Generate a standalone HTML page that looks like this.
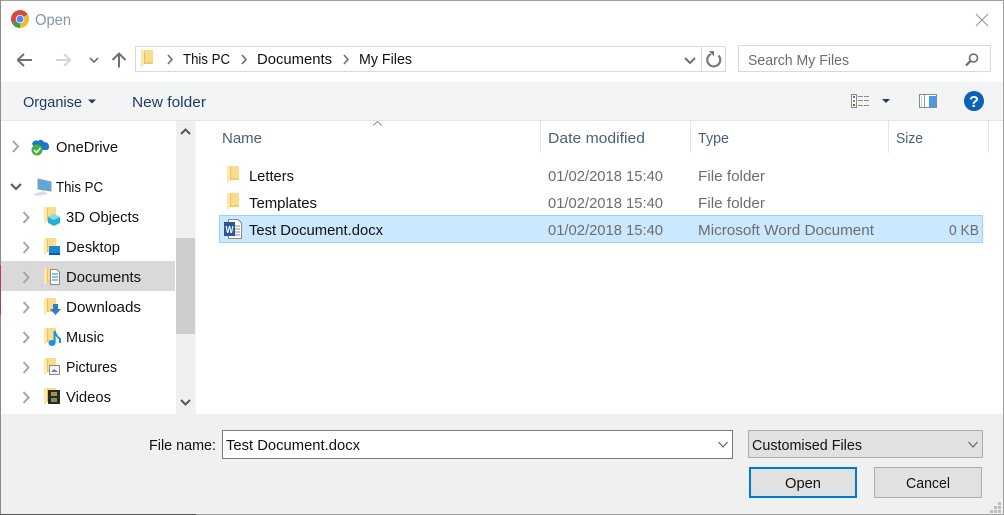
<!DOCTYPE html>
<html><head><meta charset="utf-8"><title>Open</title>
<style>
html,body{margin:0;padding:0;width:1004px;height:515px;overflow:hidden;background:#fff}
svg{display:block}
text{font-family:"Liberation Sans",sans-serif;font-size:15px;fill:#111;white-space:pre}
.h{fill:#4c607a}.g{fill:#6d6d6d}.t{fill:#1e3a5f}
</style></head><body>
<svg width="1004" height="515" viewBox="0 0 1004 515" xmlns="http://www.w3.org/2000/svg">
<defs>
<g id="f"><path d="M0 0 H12 V14 H3 L1 17 L0 16Z" fill="#f8dd8c"/><path d="M0 0 H3 V14 L1 17 L0 16Z" fill="#fbe9ac"/><rect x="3" y="1" width="1" height="13" fill="#e8c262"/><rect x="4" y="12" width="8" height="2" fill="#f0cc6c"/></g>
<path id="ch" d="M0 0 L5 5.500 L0 11" fill="none" stroke="#a6a6a6" stroke-width="2"/>
</defs>
<rect width="1004" height="515" fill="#fff"/>
<!-- window edges -->
<rect x="0" y="0" width="1004" height="1" fill="#a0a0a0"/>
<rect x="0" y="0" width="1" height="515" fill="#8c8c8c"/>
<rect x="0" y="265" width="1" height="50" fill="#b04050"/>
<rect x="1003" y="0" width="1" height="515" fill="#a0a0a0"/>
<!-- title -->
<path d="M20 19 L12.200 23.500 A9 9 0 0 1 27.800 14.500 Z" fill="#d9483b"/>
<path d="M20 19 L27.800 14.500 A9 9 0 0 1 20 28 Z" fill="#eebb33"/>
<path d="M20 19 L20 28 A9 9 0 0 1 12.200 23.500 Z" fill="#3c9c4c"/>
<circle cx="20" cy="19" r="4.300" fill="#f2f2f2"/><circle cx="20" cy="19" r="3.400" fill="#4a8af4"/>
<text x="35" y="25" textLength="36" lengthAdjust="spacingAndGlyphs" style="fill:#8a97a8;font-size:16px">Open</text>
<path d="M976 14 L988 26 M988 14 L976 26" stroke="#8f8f8f" stroke-width="1" fill="none"/>
<!-- nav arrows -->
<path d="M17.500 60 H32 M17.500 60 L24 54 M17.500 60 L24 66" stroke="#6f6f6f" stroke-width="2" fill="none"/>
<path d="M56 60 H70.500 M70.500 60 L64 54 M70.500 60 L64 66" stroke="#d6d6d6" stroke-width="2" fill="none"/>
<path d="M90 58 L94 62 L98 58" stroke="#6f6f6f" stroke-width="1.600" fill="none"/>
<path d="M119 67.500 V54 M112.500 60 L119 53.500 L125.500 60" stroke="#6f6f6f" stroke-width="2" fill="none"/>
<!-- address -->
<rect x="135.500" y="46.500" width="590" height="25" fill="#fff" stroke="#d9d9d9"/>
<rect x="701" y="47" width="1" height="24" fill="#d9d9d9"/>
<use href="#f" x="141" y="50"/>
<path d="M168 55 L172 59.500 L168 64" stroke="#6a6a6a" stroke-width="1.500" fill="none"/>
<path d="M242 55 L246 59.500 L242 64" stroke="#6a6a6a" stroke-width="1.500" fill="none"/>
<path d="M344 55 L348 59.500 L344 64" stroke="#6a6a6a" stroke-width="1.500" fill="none"/>
<text x="183" y="64" textLength="47" lengthAdjust="spacingAndGlyphs">This PC</text>
<text x="257" y="64" textLength="75" lengthAdjust="spacingAndGlyphs">Documents</text>
<text x="359" y="64" textLength="53" lengthAdjust="spacingAndGlyphs">My Files</text>
<path d="M685 58 L690 63 L695 58" stroke="#6f6f6f" stroke-width="2" fill="none"/>
<path d="M711 54 A6.500 6.500 0 1 0 718.500 55.500" stroke="#7a7a7a" stroke-width="2.200" fill="none"/>
<path d="M709 51 L714 51 L714 56.500Z" fill="#7a7a7a"/>
<!-- search -->
<rect x="738.500" y="45.500" width="252" height="26" fill="#fff" stroke="#d9d9d9"/>
<text x="748" y="65" textLength="101" lengthAdjust="spacingAndGlyphs" class="g">Search My Files</text>
<circle cx="973.500" cy="58" r="4" fill="none" stroke="#6a6a6a" stroke-width="1.600"/>
<path d="M970.500 61 L966 65.500" stroke="#6a6a6a" stroke-width="2.200"/>
<!-- toolbar -->
<rect x="1" y="82" width="1002" height="38" fill="#f3f4f6"/>
<rect x="1" y="120" width="1002" height="1" fill="#e4e5e7"/>
<text x="23" y="107" textLength="59" lengthAdjust="spacingAndGlyphs" class="t">Organise</text>
<path d="M88 99.500 H96 L92 103.500Z" fill="#1e3a5f"/>
<text x="132" y="107" textLength="74" lengthAdjust="spacingAndGlyphs" class="t">New folder</text>
<rect x="851.500" y="94.500" width="5" height="13" fill="#fff" stroke="#8a8a8a"/>
<rect x="853" y="96" width="2" height="2" fill="#4a7fc0"/><rect x="853" y="100" width="2" height="2" fill="#8a9a30"/><rect x="853" y="104" width="2" height="2" fill="#c04020"/>
<path d="M858 96.500 H869 M858 100.500 H869 M858 105.500 H869" stroke="#8a8a8a" stroke-width="1" stroke-dasharray="5 1"/>
<path d="M882 99 H890 L886 103Z" fill="#1e3a5f"/>
<rect x="919.500" y="94.500" width="17" height="13" fill="#fff" stroke="#8a8a8a"/>
<rect x="921" y="96" width="1" height="11" fill="#c8c8c8"/>
<rect x="929" y="96" width="7" height="11" fill="#4a9ae8"/>
<rect x="924" y="95" width="1" height="12" fill="#9a9a9a"/>
<circle cx="974" cy="101" r="10" fill="#0a62b8"/>
<text x="969" y="107" textLength="10" lengthAdjust="spacingAndGlyphs" style="fill:#fff;font-weight:bold;font-size:16px">?</text>
<!-- nav tree -->
<rect x="1" y="261" width="174" height="30" fill="#d9d9d9"/>
<use href="#ch" x="13" y="141"/>
<path d="M32 144 Q34 139 38 141 Q41 138 44 142 Q49 142 49 147 Q49 150 46 150 H36Z" fill="#1a7ac8"/>
<circle cx="37" cy="150" r="5.500" fill="#46b03c"/><path d="M34 150 L36.500 152.500 L40.500 148" stroke="#fff" stroke-width="1.500" fill="none"/>
<text x="56" y="152" textLength="62" lengthAdjust="spacingAndGlyphs">OneDrive</text>
<path d="M11 184 L16 189 L21 184" stroke="#555" stroke-width="2" fill="none"/>
<path d="M38 179 L51 182 V191 L38 189Z" fill="#5aa8dc" stroke="#8f9aa5"/>
<path d="M33 194 L44 191 L48 194 L37 196Z" fill="#d8dde2"/>
<text x="56" y="192" textLength="47" lengthAdjust="spacingAndGlyphs">This PC</text>
<use href="#ch" x="23.500" y="212"/><use href="#f" x="44" y="207"/>
<path d="M48 217 L54 214 L60 217 V223 L54 226 L48 223Z" fill="#29b0d0"/><path d="M48 217 L54 220 L60 217 L54 214Z" fill="#7fdcee"/>
<text x="66" y="222" textLength="73" lengthAdjust="spacingAndGlyphs">3D Objects</text>
<use href="#ch" x="23.500" y="242"/><use href="#f" x="44" y="238"/>
<rect x="49" y="246" width="11" height="8" fill="#1a86d8"/><rect x="49" y="253" width="11" height="2" fill="#0c5a9c"/>
<text x="66" y="252" textLength="54" lengthAdjust="spacingAndGlyphs">Desktop</text>
<use href="#ch" x="23.500" y="272"/><use href="#f" x="44" y="268"/>
<path d="M50.500 269.500 H57 L59.500 272 V284.500 H50.500Z" fill="#fff" stroke="#8a8a8a"/>
<path d="M52 274 H58 M52 277 H58 M52 280 H58" stroke="#2a7fc8"/>
<text x="66" y="282" textLength="75" lengthAdjust="spacingAndGlyphs">Documents</text>
<use href="#ch" x="23.500" y="302"/><use href="#f" x="44" y="298"/>
<path d="M53 304 H58 V309 H61 L55.500 315 L50 309 H53Z" fill="#2a7fc8"/>
<text x="66" y="312" textLength="75" lengthAdjust="spacingAndGlyphs">Downloads</text>
<use href="#ch" x="23.500" y="332"/><use href="#f" x="44" y="328"/>
<ellipse cx="52" cy="343" rx="3.500" ry="3" fill="#1a92e8"/><path d="M54.500 343 V331 Q56 336 60 339 V343" stroke="#1a92e8" stroke-width="2" fill="none"/>
<text x="66" y="342" textLength="38" lengthAdjust="spacingAndGlyphs">Music</text>
<use href="#ch" x="23.500" y="362"/><use href="#f" x="44" y="358"/>
<rect x="49.500" y="365.500" width="10" height="9" fill="#f4f4f4" stroke="#8a8a8a"/><path d="M51 372 L54 369 L58 372Z" fill="#6a8a9a"/>
<text x="66" y="372" textLength="51" lengthAdjust="spacingAndGlyphs">Pictures</text>
<use href="#ch" x="23.500" y="392"/><use href="#f" x="44" y="388"/>
<rect x="48" y="390" width="12" height="14" fill="#2a2a2a"/><rect x="51" y="392" width="6" height="4" fill="#b09050"/><rect x="51" y="398" width="6" height="4" fill="#709a50"/>
<text x="66" y="402" textLength="45" lengthAdjust="spacingAndGlyphs">Videos</text>
<!-- nav scrollbar -->
<rect x="176" y="121" width="19" height="293" fill="#f0f0f0"/>
<rect x="176" y="238" width="19" height="96" fill="#cdcdcd"/>
<rect x="195" y="121" width="1" height="293" fill="#f4f4f4"/>
<path d="M181 134 L185.500 129.500 L190 134" stroke="#555" stroke-width="2" fill="none"/>
<path d="M181 400 L185.500 404.500 L190 400" stroke="#555" stroke-width="2" fill="none"/>
<!-- headers -->
<path d="M373 125.500 L377.500 121.500 L382 125.500" stroke="#8a8a8a" fill="none"/>
<text x="222" y="143" textLength="40" lengthAdjust="spacingAndGlyphs" class="h">Name</text>
<text x="548" y="143" textLength="97" lengthAdjust="spacingAndGlyphs" class="h">Date modified</text>
<text x="698" y="143" textLength="31" lengthAdjust="spacingAndGlyphs" class="h">Type</text>
<text x="896" y="143" textLength="27" lengthAdjust="spacingAndGlyphs" class="h">Size</text>
<rect x="540" y="121" width="1" height="32" fill="#e5e5e5"/><rect x="690" y="121" width="1" height="32" fill="#e5e5e5"/>
<rect x="888" y="121" width="1" height="32" fill="#e5e5e5"/><rect x="988" y="121" width="1" height="32" fill="#e5e5e5"/>
<!-- rows -->
<rect x="219.500" y="215.500" width="763" height="27" fill="#cce8ff" stroke="#99d1ff"/>
<use href="#f" x="227" y="166"/><use href="#f" x="227" y="193"/>
<path d="M228.500 219.500 H238 L241.500 223 V238.500 H228.500Z" fill="#fff" stroke="#8a8a8a"/>
<path d="M235 226 H240 M235 229 H240 M235 232 H240 M235 235 H240" stroke="#8a8a8a"/>
<rect x="224" y="222" width="11" height="14" fill="#2b579a"/>
<text x="225.500" y="233" textLength="8" lengthAdjust="spacingAndGlyphs" style="fill:#fff;font-size:10px;font-weight:bold">W</text>
<text x="249" y="181" textLength="45" lengthAdjust="spacingAndGlyphs">Letters</text>
<text x="249" y="208" textLength="68" lengthAdjust="spacingAndGlyphs">Templates</text>
<text x="249" y="235" textLength="134" lengthAdjust="spacingAndGlyphs">Test Document.docx</text>
<text x="548" y="181" textLength="115" lengthAdjust="spacingAndGlyphs" class="g">01/02/2018 15:40</text>
<text x="548" y="208" textLength="115" lengthAdjust="spacingAndGlyphs" class="g">01/02/2018 15:40</text>
<text x="548" y="235" textLength="115" lengthAdjust="spacingAndGlyphs" class="g">01/02/2018 15:40</text>
<text x="698" y="181" textLength="67" lengthAdjust="spacingAndGlyphs" class="g">File folder</text>
<text x="698" y="208" textLength="67" lengthAdjust="spacingAndGlyphs" class="g">File folder</text>
<text x="698" y="235" textLength="176" lengthAdjust="spacingAndGlyphs" class="g">Microsoft Word Document</text>
<text x="949" y="235" textLength="30" lengthAdjust="spacingAndGlyphs" class="g">0 KB</text>
<!-- bottom -->
<rect x="1" y="414" width="1002" height="100" fill="#f0f0f0"/>
<rect x="0" y="514" width="1004" height="1" fill="#a0a0a0"/><rect x="0" y="514" width="196" height="1" fill="#555"/>
<text x="149" y="450" textLength="67" lengthAdjust="spacingAndGlyphs">File name:</text>
<rect x="222.500" y="430.500" width="510" height="28" fill="#fff" stroke="#7a7a7a"/>
<text x="226" y="450" textLength="134" lengthAdjust="spacingAndGlyphs">Test Document.docx</text>
<path d="M718.500 442 L723 447 L727.500 442" stroke="#555" fill="none"/>
<rect x="748.500" y="430.500" width="234" height="27" fill="#e1e1e1" stroke="#adadad"/>
<text x="752" y="450" textLength="110" lengthAdjust="spacingAndGlyphs">Customised Files</text>
<path d="M968.500 442 L973 447 L977.500 442" stroke="#555" fill="none"/>
<rect x="750" y="468" width="106" height="29" fill="#e1e1e1" stroke="#0078d7" stroke-width="2"/>
<text x="785" y="488" textLength="36" lengthAdjust="spacingAndGlyphs">Open</text>
<rect x="874.500" y="467.500" width="107" height="30" fill="#e1e1e1" stroke="#adadad"/>
<text x="906" y="488" textLength="44" lengthAdjust="spacingAndGlyphs">Cancel</text>
<g fill="#bdbdbd"><rect x="998" y="502" width="3" height="3"/><rect x="994" y="506" width="3" height="3"/><rect x="998" y="506" width="3" height="3"/><rect x="990" y="510" width="3" height="3"/><rect x="994" y="510" width="3" height="3"/><rect x="998" y="510" width="3" height="3"/></g>
</svg>
</body></html>
